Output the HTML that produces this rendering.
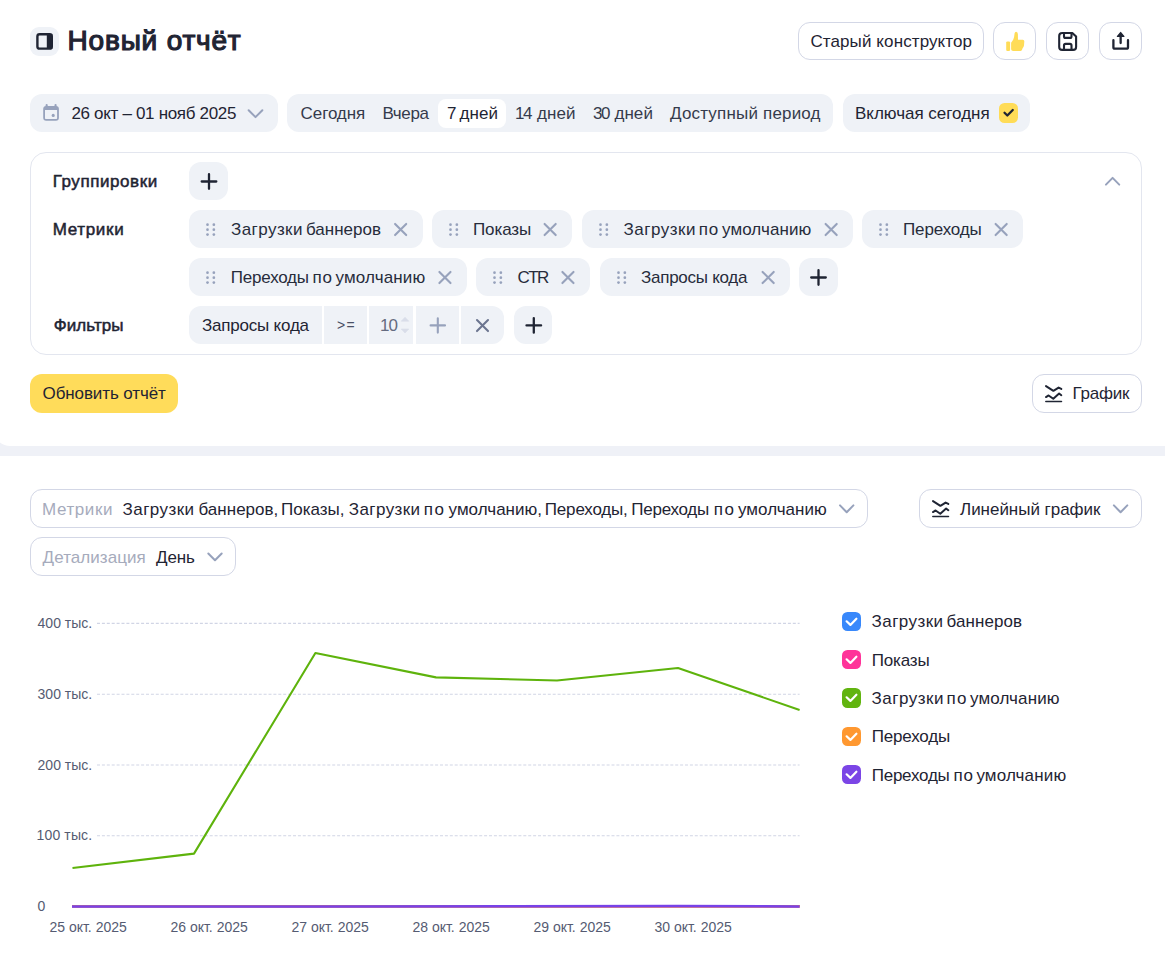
<!DOCTYPE html>
<html lang="ru"><head><meta charset="utf-8"><title>Новый отчёт</title>
<style>
html,body{margin:0;padding:0}
body{width:1165px;height:957px;position:relative;overflow:hidden;background:#fff;font-family:"Liberation Sans",sans-serif;color:#1f2433}
.b{position:absolute;box-sizing:border-box}
.t{position:absolute;white-space:pre;height:20px}
.g{width:1px}
.g span{position:absolute;top:0}
svg.o{position:absolute;left:0;top:0;width:1165px;height:957px;pointer-events:none}
</style></head>
<body>
<div class="b" style="left:0;top:430px;width:1165px;height:26px;background:#eff1f7"></div>
<div class="b" style="left:-6px;top:420px;width:1200px;height:26px;background:#fff;border-radius:0 0 0 16px"></div>
<div class="b" style="left:30.4px;top:27px;width:28.5px;height:29px;border-radius:9px;background:#eff2f7"></div>
<div class="b" style="left:798px;top:22px;width:186px;height:38px;border-radius:12px;border:1px solid #d3d7e6"></div>
<div class="b" style="left:993.4px;top:22px;width:43px;height:38px;border-radius:12px;border:1px solid #d3d7e6"></div>
<div class="b" style="left:1046.4px;top:22px;width:43px;height:38px;border-radius:12px;border:1px solid #d3d7e6"></div>
<div class="b" style="left:1099.4px;top:22px;width:43px;height:38px;border-radius:12px;border:1px solid #d3d7e6"></div>
<div class="b" style="left:30px;top:94px;width:248px;height:38px;border-radius:12px;background:#eff2f7"></div>
<div class="b" style="left:287px;top:94px;width:546px;height:38px;border-radius:12px;background:#eff2f7"></div>
<div class="b" style="left:438px;top:99px;width:68px;height:28.8px;border-radius:8px;background:#fff"></div>
<div class="b" style="left:843px;top:94px;width:187px;height:38px;border-radius:12px;background:#eff2f7"></div>
<div class="b" style="left:999px;top:103px;width:19px;height:20px;border-radius:5.5px;background:#ffdc57"></div>
<div class="b" style="left:30px;top:152px;width:1112px;height:203px;border-radius:16px;border:1px solid #e3e6ef"></div>
<div class="b" style="left:189px;top:162px;width:39px;height:38.4px;border-radius:12px;background:#eff2f7"></div>
<div class="b" style="left:189px;top:210px;width:233.5px;height:38px;border-radius:12px;background:#eff2f7"></div>
<div class="b" style="left:432px;top:210px;width:140px;height:38px;border-radius:12px;background:#eff2f7"></div>
<div class="b" style="left:582px;top:210px;width:271px;height:38px;border-radius:12px;background:#eff2f7"></div>
<div class="b" style="left:862px;top:210px;width:161px;height:38px;border-radius:12px;background:#eff2f7"></div>
<div class="b" style="left:189px;top:258px;width:277.8px;height:38px;border-radius:12px;background:#eff2f7"></div>
<div class="b" style="left:476px;top:258px;width:113.8px;height:38px;border-radius:12px;background:#eff2f7"></div>
<div class="b" style="left:600px;top:258px;width:190px;height:38px;border-radius:12px;background:#eff2f7"></div>
<div class="b" style="left:799px;top:258px;width:38.8px;height:38px;border-radius:12px;background:#eff2f7"></div>
<div class="b" style="left:189px;top:306px;width:132.7px;height:38px;border-radius:12px 0 0 12px;background:#eff2f7"></div>
<div class="b" style="left:324px;top:306px;width:43px;height:38px;border-radius:0px;background:#eff2f7"></div>
<div class="b" style="left:369px;top:306px;width:44px;height:38px;border-radius:0px;background:#eff2f7"></div>
<div class="b" style="left:416px;top:306px;width:42.8px;height:38px;border-radius:0px;background:#eff2f7"></div>
<div class="b" style="left:461px;top:306px;width:43px;height:38px;border-radius:0 12px 12px 0;background:#eff2f7"></div>
<div class="b" style="left:514px;top:306px;width:38.4px;height:38px;border-radius:12px;background:#eff2f7"></div>
<div class="b" style="left:30px;top:374px;width:148px;height:39px;border-radius:12px;background:#ffdc5a"></div>
<div class="b" style="left:1032px;top:374px;width:110px;height:39px;border-radius:12px;border:1px solid #d3d7e6"></div>
<div class="b" style="left:30px;top:489px;width:838px;height:39px;border-radius:12px;border:1px solid #d3d7e6"></div>
<div class="b" style="left:919px;top:489px;width:223px;height:39px;border-radius:12px;border:1px solid #d3d7e6"></div>
<div class="b" style="left:30px;top:537px;width:206px;height:39px;border-radius:12px;border:1px solid #d3d7e6"></div>
<div class="b" style="left:842px;top:612px;width:19px;height:19px;border-radius:5.5px;background:#3888fb"></div>
<div class="b" style="left:842px;top:650px;width:19px;height:19px;border-radius:5.5px;background:#ff3399"></div>
<div class="b" style="left:842px;top:688px;width:19px;height:20px;border-radius:5.5px;background:#61b40f"></div>
<div class="b" style="left:842px;top:727px;width:19px;height:19px;border-radius:5.5px;background:#ff9830"></div>
<div class="b" style="left:842px;top:765px;width:19px;height:19px;border-radius:5.5px;background:#7b45e6"></div>
<svg class="o" viewBox="0 0 1165 957">
<rect x="37.4" y="34.27" width="14.4" height="14.4" rx="2.2" fill="none" stroke="#1f2433" stroke-width="2.4"/><rect x="46.8" y="34" width="5.5" height="15" fill="#1f2433"/>
<g fill="#ffdc57"><rect x="1006.2" y="41.4" width="3.9" height="9.6" rx="1.2"/><path d="M1011.1 43.2 Q1011.1 42.2 1012 41.4 L1013.3 39.6 Q1014.3 37 1014.6 33.3 Q1014.9 31.8 1016.1 31.8 Q1017.9 32.1 1017.9 34.2 L1018 39.7 L1022.8 39.7 Q1024.4 39.9 1024.3 41.5 L1024 45.6 Q1023.7 47.3 1022.6 48.3 Q1022.2 50.9 1020.6 50.9 L1013.2 50.9 Q1011.2 50.7 1011.1 49.2 Z"/></g>
<g stroke="#1f2433" stroke-width="2.1" fill="none" stroke-linejoin="round" stroke-linecap="round"><path d="M1062.2 32.95H1072.3L1076.1 36.6V46.9Q1076.1 49.9 1073.1 49.9H1062.2Q1059.2 49.9 1059.2 46.9V35.95Q1059.2 32.95 1062.2 32.95Z"/><path d="M1064 33.2V36.4Q1064 37.9 1065.5 37.9H1070Q1071.5 37.9 1071.5 36.4V33.2"/><path d="M1064 49.7V45.4Q1064 43.9 1065.5 43.9H1070Q1071.5 43.9 1071.5 45.4V49.7"/></g>
<g stroke="#1f2433" stroke-width="2.3" fill="none" stroke-linejoin="round" stroke-linecap="round"><path d="M1113.4 40.2V47.2Q1113.4 48.7 1114.9 48.7H1126.5Q1128 48.7 1128 47.2V40.2"/><path d="M1120.65 36V43"/></g><path d="M1120.65 32.6L1123.8 36.4H1117.5Z" fill="#1f2433" stroke="#1f2433" stroke-width="1.4" stroke-linejoin="round"/>
<g fill="#97a2bc"><path fill-rule="evenodd" d="M46.2 105.9H55.9Q58.9 105.9 58.9 108.9V117.7Q58.9 120.7 55.9 120.7H46.2Q43.2 120.7 43.2 117.7V108.9Q43.2 105.9 46.2 105.9ZM45 110.1V118.3Q45 119 45.7 119H56.4Q57.1 119 57.1 118.3V110.1Z"/><rect x="45.6" y="103.9" width="2.1" height="4" rx="1"/><rect x="54.5" y="103.9" width="2.1" height="4" rx="1"/><circle cx="53.2" cy="115.4" r="1.55"/></g>
<path d="M248.65 110.20L255.50 117.10L262.35 110.20" stroke="#97a2bc" stroke-width="2.0" stroke-linecap="round" stroke-linejoin="round" fill="none"/>
<path d="M1004.53 112.79L1007.34 115.51L1012.77 109.98" stroke="#1f2433" stroke-width="2.3" stroke-linecap="round" stroke-linejoin="round" fill="none"/>
<path d="M201.70 181.50H216.30M209.00 174.20V188.80" stroke="#1f2433" stroke-width="2.3" stroke-linecap="round" fill="none"/>
<path d="M1105.95 184.60L1112.60 177.90L1119.25 184.60" stroke="#97a2bc" stroke-width="2.0" stroke-linecap="round" stroke-linejoin="round" fill="none"/>
<g fill="#97a2bc"><circle cx="207.50" cy="224.70" r="1.35"/><circle cx="207.50" cy="229.65" r="1.35"/><circle cx="207.50" cy="234.55" r="1.35"/><circle cx="213.85" cy="224.70" r="1.35"/><circle cx="213.85" cy="229.65" r="1.35"/><circle cx="213.85" cy="234.55" r="1.35"/></g>
<path d="M395.10 223.95L406.20 235.05M406.20 223.95L395.10 235.05" stroke="#97a2bc" stroke-width="2.1" stroke-linecap="round" fill="none"/>
<g fill="#97a2bc"><circle cx="450.50" cy="224.70" r="1.35"/><circle cx="450.50" cy="229.65" r="1.35"/><circle cx="450.50" cy="234.55" r="1.35"/><circle cx="456.85" cy="224.70" r="1.35"/><circle cx="456.85" cy="229.65" r="1.35"/><circle cx="456.85" cy="234.55" r="1.35"/></g>
<path d="M544.60 223.95L555.70 235.05M555.70 223.95L544.60 235.05" stroke="#97a2bc" stroke-width="2.1" stroke-linecap="round" fill="none"/>
<g fill="#97a2bc"><circle cx="600.50" cy="224.70" r="1.35"/><circle cx="600.50" cy="229.65" r="1.35"/><circle cx="600.50" cy="234.55" r="1.35"/><circle cx="606.85" cy="224.70" r="1.35"/><circle cx="606.85" cy="229.65" r="1.35"/><circle cx="606.85" cy="234.55" r="1.35"/></g>
<path d="M825.60 223.95L836.70 235.05M836.70 223.95L825.60 235.05" stroke="#97a2bc" stroke-width="2.1" stroke-linecap="round" fill="none"/>
<g fill="#97a2bc"><circle cx="880.50" cy="224.70" r="1.35"/><circle cx="880.50" cy="229.65" r="1.35"/><circle cx="880.50" cy="234.55" r="1.35"/><circle cx="886.85" cy="224.70" r="1.35"/><circle cx="886.85" cy="229.65" r="1.35"/><circle cx="886.85" cy="234.55" r="1.35"/></g>
<path d="M995.60 223.95L1006.70 235.05M1006.70 223.95L995.60 235.05" stroke="#97a2bc" stroke-width="2.1" stroke-linecap="round" fill="none"/>
<g fill="#97a2bc"><circle cx="207.50" cy="272.70" r="1.35"/><circle cx="207.50" cy="277.65" r="1.35"/><circle cx="207.50" cy="282.55" r="1.35"/><circle cx="213.85" cy="272.70" r="1.35"/><circle cx="213.85" cy="277.65" r="1.35"/><circle cx="213.85" cy="282.55" r="1.35"/></g>
<path d="M439.40 271.95L450.50 283.05M450.50 271.95L439.40 283.05" stroke="#97a2bc" stroke-width="2.1" stroke-linecap="round" fill="none"/>
<g fill="#97a2bc"><circle cx="494.50" cy="272.70" r="1.35"/><circle cx="494.50" cy="277.65" r="1.35"/><circle cx="494.50" cy="282.55" r="1.35"/><circle cx="500.85" cy="272.70" r="1.35"/><circle cx="500.85" cy="277.65" r="1.35"/><circle cx="500.85" cy="282.55" r="1.35"/></g>
<path d="M562.40 271.95L573.50 283.05M573.50 271.95L562.40 283.05" stroke="#97a2bc" stroke-width="2.1" stroke-linecap="round" fill="none"/>
<g fill="#97a2bc"><circle cx="618.50" cy="272.70" r="1.35"/><circle cx="618.50" cy="277.65" r="1.35"/><circle cx="618.50" cy="282.55" r="1.35"/><circle cx="624.85" cy="272.70" r="1.35"/><circle cx="624.85" cy="277.65" r="1.35"/><circle cx="624.85" cy="282.55" r="1.35"/></g>
<path d="M762.60 271.95L773.70 283.05M773.70 271.95L762.60 283.05" stroke="#97a2bc" stroke-width="2.1" stroke-linecap="round" fill="none"/>
<path d="M811.20 277.50H825.80M818.50 270.20V284.80" stroke="#1f2433" stroke-width="2.3" stroke-linecap="round" fill="none"/>
<path d="M401.2 321.2L405 317.2L408.8 321.2ZM401.2 329L405 333L408.8 329Z" fill="#d9dde9" stroke="#d9dde9" stroke-width="0.6" stroke-linejoin="round"/>
<path d="M430.60 325.40H445.00M437.80 318.20V332.60" stroke="#97a2bc" stroke-width="2.1" stroke-linecap="round" fill="none"/>
<path d="M477.00 320.10L488.00 331.10M488.00 320.10L477.00 331.10" stroke="#6c7590" stroke-width="2.1" stroke-linecap="round" fill="none"/>
<path d="M526.50 325.40H541.10M533.80 318.10V332.70" stroke="#1f2433" stroke-width="2.3" stroke-linecap="round" fill="none"/>
<g transform="translate(1044.9,384.95)" stroke="#1f2433" fill="none" stroke-linecap="round" stroke-linejoin="round"><path d="M1.1 1.1L8.5 5.9L13.7 2.6L16.4 4" stroke-width="2"/><path d="M1.1 12.1L3.7 10.5L8.4 13.8L14.2 8.6L16.4 10.3" stroke-width="2"/><path d="M0.9 16.5H16.6" stroke-width="1.5"/></g>
<path d="M840.00 505.40L846.70 512.20L853.40 505.40" stroke="#97a2bc" stroke-width="2.0" stroke-linecap="round" stroke-linejoin="round" fill="none"/>
<g transform="translate(931.9,499.95)" stroke="#1f2433" fill="none" stroke-linecap="round" stroke-linejoin="round"><path d="M1.1 1.1L8.5 5.9L13.7 2.6L16.4 4" stroke-width="2"/><path d="M1.1 12.1L3.7 10.5L8.4 13.8L14.2 8.6L16.4 10.3" stroke-width="2"/><path d="M0.9 16.5H16.6" stroke-width="1.5"/></g>
<path d="M1113.90 505.40L1120.60 512.20L1127.30 505.40" stroke="#97a2bc" stroke-width="2.0" stroke-linecap="round" stroke-linejoin="round" fill="none"/>
<path d="M208.30 553.50L215.00 560.30L221.70 553.50" stroke="#97a2bc" stroke-width="2.0" stroke-linecap="round" stroke-linejoin="round" fill="none"/>
<path d="M97 623.40H799.6" stroke="#d1d5e5" stroke-width="1.1" stroke-dasharray="3 1.9" fill="none"/><path d="M97 694.20H799.6" stroke="#d1d5e5" stroke-width="1.1" stroke-dasharray="3 1.9" fill="none"/><path d="M97 765.00H799.6" stroke="#d1d5e5" stroke-width="1.1" stroke-dasharray="3 1.9" fill="none"/><path d="M97 835.80H799.6" stroke="#d1d5e5" stroke-width="1.1" stroke-dasharray="3 1.9" fill="none"/><polyline points="72.5,868 194,853.6 315.4,653 436,677.4 557,680.5 678,668 799.6,710" stroke="#5eb30c" stroke-width="2.1" fill="none" stroke-linejoin="round"/><path d="M72 906.2H799.6" stroke="#3888fb" stroke-width="2.4" fill="none"/><path d="M72 906.2H799.6" stroke="#ff3d9a" stroke-width="2.4" fill="none"/><path d="M72 906.2H799.6" stroke="#ff9a33" stroke-width="2.4" fill="none"/><path d="M72 906.5L315 906.4L678 906.0L799.6 906.5" stroke="#7842e8" stroke-width="2.5" fill="none"/>
<path d="M846.6 621.30L850.4 624.90L856.4 618.70" stroke="#fff" stroke-width="2.2" stroke-linecap="round" stroke-linejoin="round" fill="none"/>
<path d="M846.6 659.30L850.4 662.90L856.4 656.70" stroke="#fff" stroke-width="2.2" stroke-linecap="round" stroke-linejoin="round" fill="none"/>
<path d="M846.6 697.30L850.4 700.90L856.4 694.70" stroke="#fff" stroke-width="2.2" stroke-linecap="round" stroke-linejoin="round" fill="none"/>
<path d="M846.6 736.30L850.4 739.90L856.4 733.70" stroke="#fff" stroke-width="2.2" stroke-linecap="round" stroke-linejoin="round" fill="none"/>
<path d="M846.6 774.30L850.4 777.90L856.4 771.70" stroke="#fff" stroke-width="2.2" stroke-linecap="round" stroke-linejoin="round" fill="none"/>
</svg>
<span class="t" style="left:67.60px;top:23.80px;font-size:28px;line-height:34px;letter-spacing:0.805px;color:#1f2433;-webkit-text-stroke:1.2px #1f2433">Новый отчёт</span>
<span class="t" style="left:810.40px;top:31.80px;font-size:17px;line-height:20px;letter-spacing:0.105px;color:#1f2433">Старый конструктор</span>
<span class="t" style="left:71.40px;top:103.80px;font-size:17px;line-height:20px;letter-spacing:-0.315px;color:#1f2433">26 окт – 01 нояб 2025</span>
<span class="t" style="left:300.60px;top:103.80px;font-size:17px;line-height:20px;letter-spacing:-0.091px;color:#353b4c">Сегодня</span>
<span class="t" style="left:382.40px;top:103.80px;font-size:17px;line-height:20px;letter-spacing:-0.335px;color:#353b4c">Вчера</span>
<span class="t g" style="left:0;top:103.80px;font-size:17px;line-height:20px;color:#1f2433"><span style="left:447.00px;letter-spacing:0.000px">7</span> <span style="left:459.40px;letter-spacing:0.146px">дней</span></span>
<span class="t g" style="left:0;top:103.80px;font-size:17px;line-height:20px;color:#353b4c"><span style="left:515.00px;letter-spacing:-1.455px">14</span> <span style="left:537.00px;letter-spacing:0.079px">дней</span></span>
<span class="t g" style="left:0;top:103.80px;font-size:17px;line-height:20px;color:#353b4c"><span style="left:593.00px;letter-spacing:-1.455px">30</span> <span style="left:614.40px;letter-spacing:0.079px">дней</span></span>
<span class="t" style="left:670.00px;top:103.80px;font-size:17px;line-height:20px;letter-spacing:0.183px;color:#353b4c">Доступный период</span>
<span class="t" style="left:855.00px;top:103.80px;font-size:17px;line-height:20px;letter-spacing:-0.020px;color:#1f2433">Включая сегодня</span>
<span class="t" style="left:52.65px;top:171.80px;font-size:17px;line-height:20px;letter-spacing:0.580px;color:#1f2433;-webkit-text-stroke:0.5px #1f2433">Группировки</span>
<span class="t" style="left:52.65px;top:219.80px;font-size:17px;line-height:20px;letter-spacing:0.681px;color:#1f2433;-webkit-text-stroke:0.5px #1f2433">Метрики</span>
<span class="t" style="left:53.65px;top:315.80px;font-size:17px;line-height:20px;letter-spacing:0.098px;color:#1f2433;-webkit-text-stroke:0.5px #1f2433">Фильтры</span>
<span class="t g" style="left:0;top:219.80px;font-size:17px;line-height:20px;color:#272c3b"><span style="left:231.00px;letter-spacing:0.440px">Загрузки</span> <span style="left:306.00px;letter-spacing:0.008px">баннеров</span></span>
<span class="t" style="left:473.00px;top:219.80px;font-size:17px;line-height:20px;letter-spacing:-0.108px;color:#272c3b">Показы</span>
<span class="t g" style="left:0;top:219.80px;font-size:17px;line-height:20px;color:#272c3b"><span style="left:623.60px;letter-spacing:0.497px">Загрузки</span> <span style="left:698.80px;letter-spacing:0.794px">по</span> <span style="left:722.00px;letter-spacing:0.098px">умолчанию</span></span>
<span class="t" style="left:903.00px;top:219.80px;font-size:17px;line-height:20px;letter-spacing:-0.131px;color:#272c3b">Переходы</span>
<span class="t g" style="left:0;top:267.80px;font-size:17px;line-height:20px;color:#272c3b"><span style="left:230.80px;letter-spacing:-0.217px">Переходы</span> <span style="left:312.40px;letter-spacing:0.994px">по</span> <span style="left:335.60px;letter-spacing:0.123px">умолчанию</span></span>
<span class="t" style="left:517.60px;top:267.80px;font-size:17px;line-height:20px;letter-spacing:-1.631px;color:#272c3b">CTR</span>
<span class="t" style="left:641.00px;top:267.80px;font-size:17px;line-height:20px;letter-spacing:-0.264px;color:#272c3b">Запросы кода</span>
<span class="t" style="left:202.00px;top:315.80px;font-size:17px;line-height:20px;letter-spacing:-0.210px;color:#1f2433">Запросы кода</span>
<span class="t" style="left:337.00px;top:315.30px;font-size:14px;line-height:20px;letter-spacing:1.424px;color:#4a5066">&gt;=</span>
<span class="t" style="left:380.00px;top:315.80px;font-size:17px;line-height:20px;letter-spacing:-0.855px;color:#656b80">10</span>
<span class="t" style="left:42.60px;top:383.80px;font-size:17px;line-height:20px;letter-spacing:-0.113px;color:#1f2433">Обновить отчёт</span>
<span class="t" style="left:1072.60px;top:383.80px;font-size:17px;line-height:20px;letter-spacing:-0.249px;color:#1f2433">График</span>
<span class="t" style="left:42.00px;top:499.80px;font-size:17px;line-height:20px;letter-spacing:0.597px;color:#a6abbc">Метрики</span>
<span class="t g" style="left:0;top:499.80px;font-size:17px;line-height:20px;color:#1f2433"><span style="left:122.60px;letter-spacing:0.440px">Загрузки</span> <span style="left:198.50px;letter-spacing:0.016px">баннеров,</span> <span style="left:281.10px;letter-spacing:-0.027px">Показы,</span> <span style="left:348.80px;letter-spacing:0.412px">Загрузки</span> <span style="left:423.80px;letter-spacing:1.394px">по</span> <span style="left:448.60px;letter-spacing:0.015px">умолчанию,</span> <span style="left:544.80px;letter-spacing:-0.180px">Переходы,</span> <span style="left:631.30px;letter-spacing:-0.260px">Переходы</span> <span style="left:713.70px;letter-spacing:1.494px">по</span> <span style="left:738.00px;letter-spacing:0.023px">умолчанию</span></span>
<span class="t" style="left:960.00px;top:499.80px;font-size:17px;line-height:20px;letter-spacing:-0.029px;color:#1f2433">Линейный график</span>
<span class="t" style="left:42.60px;top:547.80px;font-size:17px;line-height:20px;letter-spacing:0.065px;color:#a6abbc">Детализация</span>
<span class="t" style="left:156.00px;top:547.80px;font-size:17px;line-height:20px;letter-spacing:-0.119px;color:#1f2433">День</span>
<span class="t" style="left:37.60px;top:613.30px;font-size:14px;line-height:20px;letter-spacing:-0.018px;color:#555b72">400 тыс.</span>
<span class="t" style="left:37.60px;top:684.30px;font-size:14px;line-height:20px;letter-spacing:-0.018px;color:#555b72">300 тыс.</span>
<span class="t" style="left:37.60px;top:755.30px;font-size:14px;line-height:20px;letter-spacing:-0.018px;color:#555b72">200 тыс.</span>
<span class="t" style="left:36.60px;top:825.30px;font-size:14px;line-height:20px;letter-spacing:0.125px;color:#555b72">100 тыс.</span>
<span class="t" style="left:37.60px;top:896.30px;font-size:14px;line-height:20px;letter-spacing:0.000px;color:#555b72">0</span>
<span class="t" style="left:49.50px;top:917.30px;font-size:14px;line-height:20px;letter-spacing:-0.003px;color:#555b72">25 окт. 2025</span>
<span class="t" style="left:170.50px;top:917.30px;font-size:14px;line-height:20px;letter-spacing:-0.003px;color:#555b72">26 окт. 2025</span>
<span class="t" style="left:291.50px;top:917.30px;font-size:14px;line-height:20px;letter-spacing:-0.003px;color:#555b72">27 окт. 2025</span>
<span class="t" style="left:412.50px;top:917.30px;font-size:14px;line-height:20px;letter-spacing:-0.003px;color:#555b72">28 окт. 2025</span>
<span class="t" style="left:533.50px;top:917.30px;font-size:14px;line-height:20px;letter-spacing:-0.003px;color:#555b72">29 окт. 2025</span>
<span class="t" style="left:654.50px;top:917.30px;font-size:14px;line-height:20px;letter-spacing:-0.003px;color:#555b72">30 окт. 2025</span>
<span class="t g" style="left:0;top:611.80px;font-size:17px;line-height:20px;color:#1f2433"><span style="left:871.60px;letter-spacing:0.440px">Загрузки</span> <span style="left:946.60px;letter-spacing:0.066px">баннеров</span></span>
<span class="t" style="left:871.70px;top:650.80px;font-size:17px;line-height:20px;letter-spacing:-0.168px;color:#1f2433">Показы</span>
<span class="t g" style="left:0;top:688.80px;font-size:17px;line-height:20px;color:#1f2433"><span style="left:871.60px;letter-spacing:0.497px">Загрузки</span> <span style="left:946.60px;letter-spacing:1.194px">по</span> <span style="left:970.00px;letter-spacing:0.123px">умолчанию</span></span>
<span class="t" style="left:871.70px;top:726.80px;font-size:17px;line-height:20px;letter-spacing:-0.174px;color:#1f2433">Переходы</span>
<span class="t g" style="left:0;top:765.80px;font-size:17px;line-height:20px;color:#1f2433"><span style="left:871.70px;letter-spacing:-0.231px">Переходы</span> <span style="left:953.40px;letter-spacing:0.794px">по</span> <span style="left:976.40px;letter-spacing:0.148px">умолчанию</span></span>
</body></html>
